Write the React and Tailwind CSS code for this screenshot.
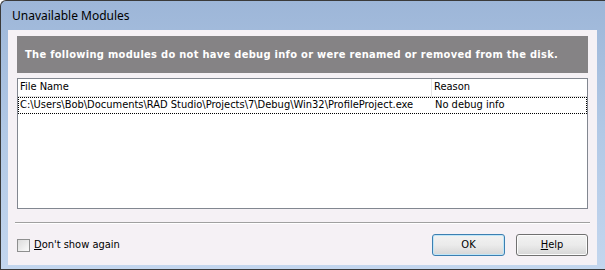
import React, { useState } from "react";

const files = [
  {
    name: "C:\\Users\\Bob\\Documents\\RAD Studio\\Projects\\7\\Debug\\Win32\\ProfileProject.exe",
    reason: "No debug info",
  },
];

export default function App() {
  const [dontShow, setDontShow] = useState(false);

  return (
    <div className="w-[605px] h-[270px] overflow-hidden bg-white">
      <div className="w-[605px] h-[270px] flex flex-col rounded-tl-[6px] border-l border-t border-b border-[#3a3a3a] bg-gradient-to-b from-[#9db6d8] via-[#b2c9e6] to-[#c3d6ee]">
        {/* title bar */}
        <div className="h-[29px] flex items-center pl-[11px] pt-[1px] text-[12px] text-black font-['Noto_Sans',sans-serif]">
          Unavailable Modules
        </div>

        {/* client area */}
        <div className="ml-[7px] mr-[8px] mb-[4px] flex-1 flex flex-col bg-[#f5f1f5] font-['DejaVu_Sans_Condensed','DejaVu_Sans',sans-serif] text-[11px] text-black">
          <div className="mt-[6px] mx-[9px] h-[37px] bg-[#858385] flex items-center pl-[8px] pt-[1px]">
            <span className="font-bold text-white tracking-[0.3px]">
              The following modules do not have debug info or were renamed or removed from the disk.
            </span>
          </div>

          <div className="mt-[5px] mx-[9px] h-[131px] border border-[#828790] bg-white flex flex-col">
            <div className="h-[18px] flex border-b border-[#e5e5e5]">
              <div className="w-[414px] pl-[2px] flex items-center border-r border-[#e5e5e5]">File Name</div>
              <div className="flex-1 pl-[2px] flex items-center">Reason</div>
            </div>
            {files.map((f) => (
              <div key={f.name} className="h-[17px] flex border border-dotted border-black">
                <div className="w-[414px] pl-[1px] flex items-center whitespace-nowrap">{f.name}</div>
                <div className="flex-1 pl-[2px] flex items-center">{f.reason}</div>
              </div>
            ))}
          </div>

          <div className="mt-[13px] mx-[7px] h-[1px] bg-[#a0a0a0] border-b border-white box-content"></div>

          <div className="mt-[10px] mx-[9px] flex items-center">
            <label className="flex items-center gap-[4px] cursor-default">
              <button
                type="button"
                onClick={() => setDontShow(!dontShow)}
                className="w-[13px] h-[13px] border border-[#8e8f8f] bg-gradient-to-br from-[#dcdcdc] to-[#fbfbfb] flex items-center justify-center"
              >
                {dontShow && (
                  <svg width="9" height="9" viewBox="0 0 9 9">
                    <path d="M1 4.5 L3.5 7 L8 1.5" stroke="#222" strokeWidth="1.5" fill="none" />
                  </svg>
                )}
              </button>
              <span>
                <span className="underline">D</span>on't show again
              </span>
            </label>
            <div className="ml-auto flex gap-[11px]">
              <button className="w-[73px] h-[22px] rounded-[3px] border border-[#3c7fb1] bg-gradient-to-b from-[#f2f2f2] via-[#ebebeb] to-[#d6d6d6] shadow-[inset_0_0_0_1px_#bfe6f8]">
                OK
              </button>
              <button className="w-[72px] h-[22px] rounded-[3px] border border-[#707070] bg-gradient-to-b from-[#f2f2f2] via-[#ebebeb] to-[#d6d6d6] shadow-[inset_0_0_0_1px_#fcfcfc]">
                <span className="underline">H</span>elp
              </button>
            </div>
          </div>
        </div>
      </div>
    </div>
  );
}
